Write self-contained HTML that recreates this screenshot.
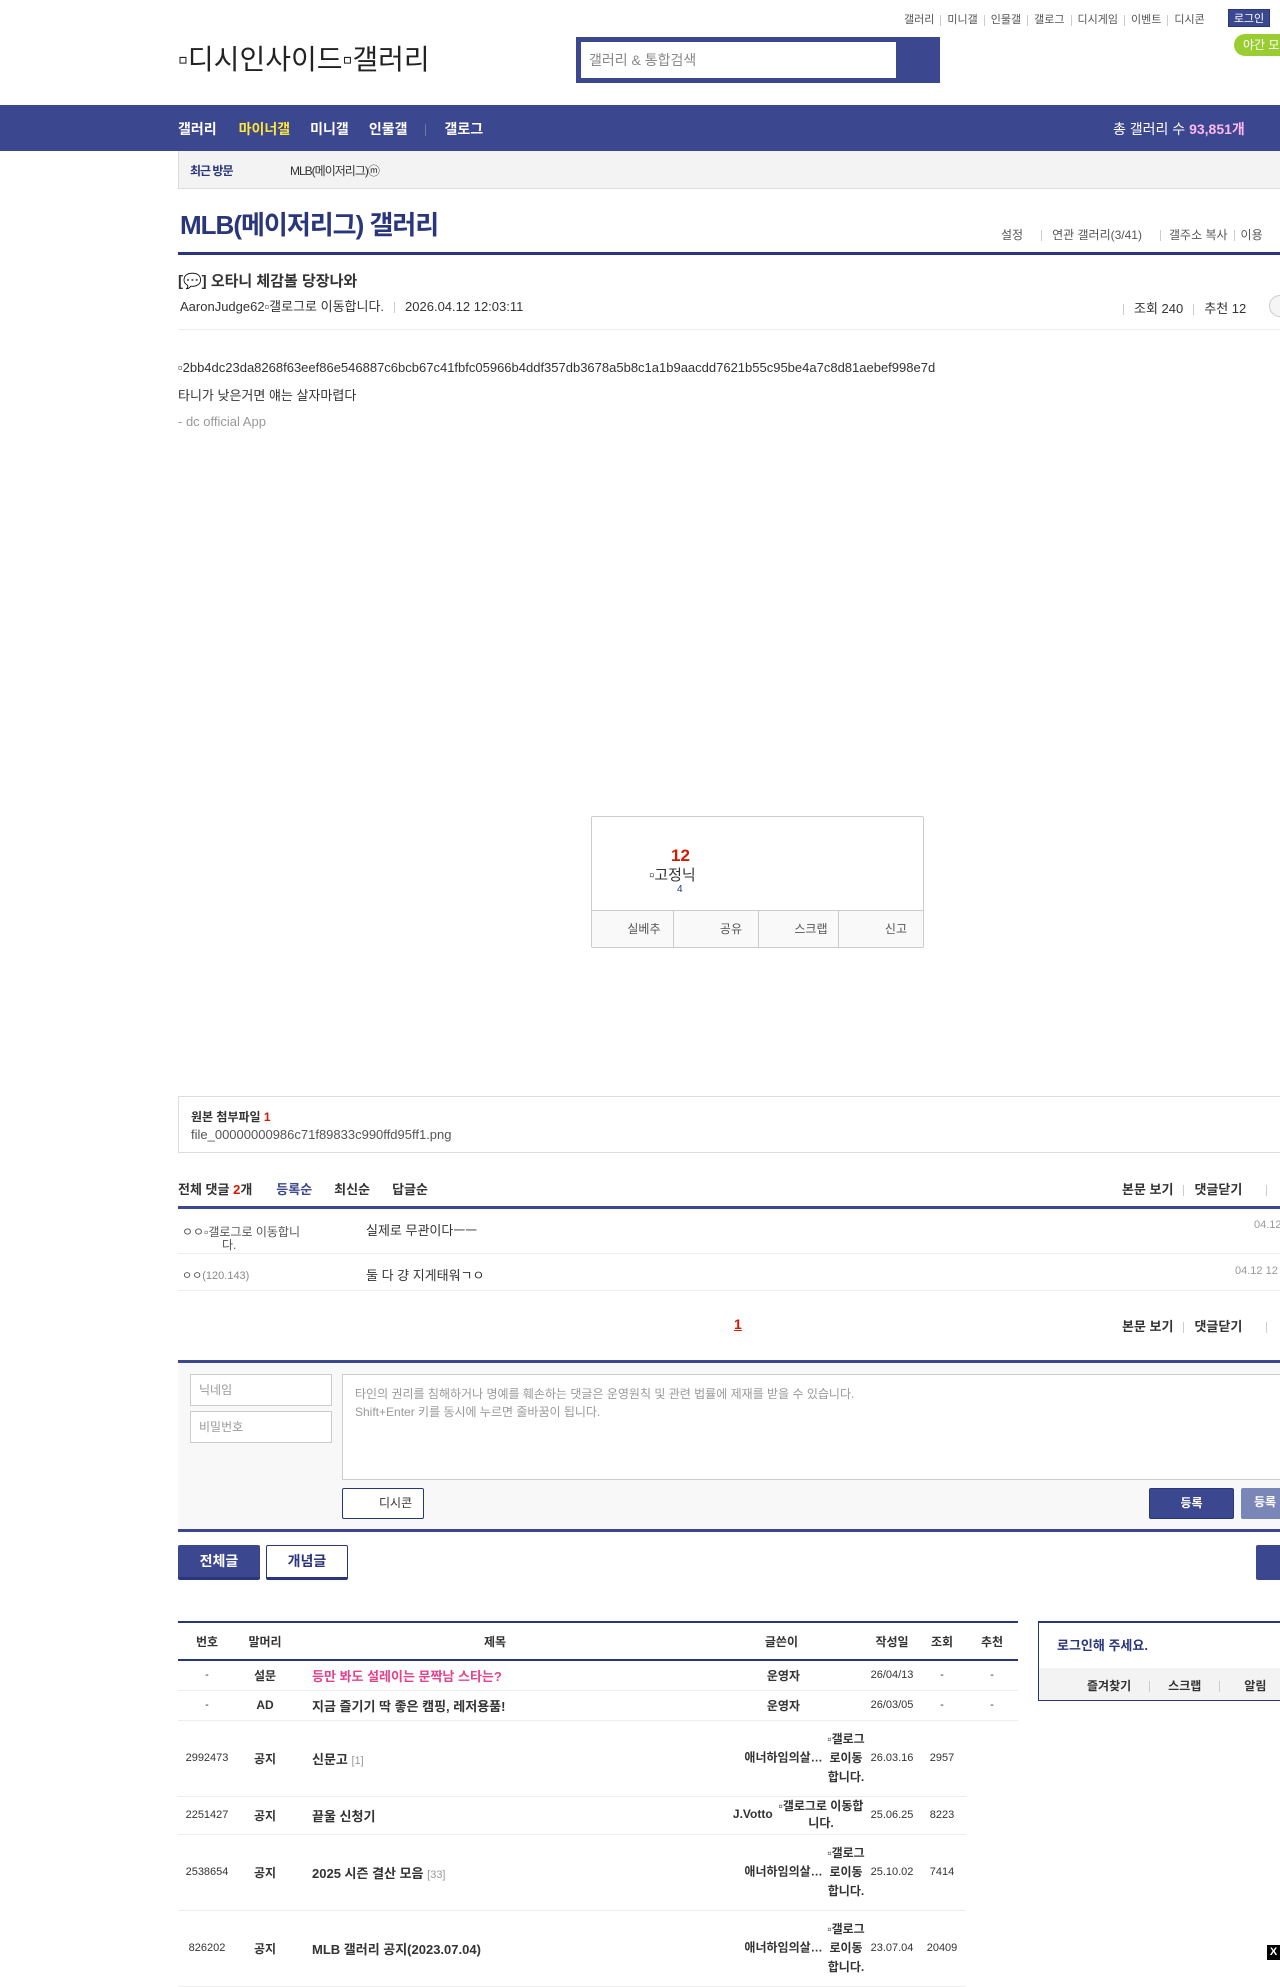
<!DOCTYPE html>
<html><head><meta charset="utf-8"><style>
*{margin:0;padding:0;box-sizing:border-box}
body{width:1280px;height:1960px;overflow:hidden;background:#fff;font-family:"Liberation Sans","Noto Sans CJK KR",sans-serif;color:#333;position:relative;font-size:13px}
.a{position:absolute;white-space:nowrap}
.sep{display:inline-block;width:1px;height:11px;background:#ccc;margin:0 6px;vertical-align:middle}
table{border-collapse:collapse}
.lt td{font-size:11px;text-align:center;border-bottom:1px solid #eee;color:#333}
.lt td.t{text-align:left;font-size:13px;font-weight:bold;padding-left:18px}
.lt td.b{font-weight:bold;font-size:12px}
</style></head><body>
<div class="a" style="left:904px;top:11px;font-size:11px;color:#555">갤러리<span class="sep"></span>미니갤<span class="sep"></span>인물갤<span class="sep"></span>갤로그<span class="sep"></span>디시게임<span class="sep"></span>이벤트<span class="sep"></span>디시콘</div>
<div class="a" style="left:1228px;top:9px;width:42px;height:18px;background:#3b4890;color:#fff;font-size:11px;text-align:center;line-height:18px;border:1px solid #29367c">로그인</div>
<div class="a" style="left:1234px;top:34px;width:60px;height:22px;background:#9acd32;border-radius:11px;color:#fff;font-size:12px;line-height:22px;padding-left:9px">야간 모드</div>
<div class="a" style="left:178px;top:38px;font-size:28px;color:#222">▫디시인사이드▫갤러리</div>
<div class="a" style="left:576px;top:37px;width:364px;height:46px;background:#3b4890"></div>
<div class="a" style="left:581px;top:42px;width:315px;height:36px;background:#fff;font-size:14px;color:#888;line-height:36px;padding-left:8px">갤러리 &amp; 통합검색</div>
<div class="a" style="left:0;top:105px;width:1280px;height:46px;background:#3b4890"></div>
<div class="a" style="left:178px;top:119px;font-size:14px;font-weight:bold;color:#fff">갤러리<span style="color:#ffe63b;margin-left:22px">마이너갤</span><span style="margin-left:20px">미니갤</span><span style="margin-left:20px">인물갤</span><span style="display:inline-block;width:1px;height:12px;background:#6b76b0;margin:0 18px;vertical-align:middle"></span>갤로그</div>
<div class="a" style="left:1113px;top:119px;font-size:14px;color:#fff">총 갤러리 수 <b style="color:#ffb7f0">93,851개</b></div>
<div class="a" style="left:178px;top:151px;width:1110px;height:38px;background:#f3f3f3;border:1px solid #ddd;border-top:none"></div>
<div class="a" style="left:190px;top:162px;font-size:12px;font-weight:bold;color:#29367c;letter-spacing:-1px">최근 방문</div>
<div class="a" style="left:290px;top:162px;font-size:12px;color:#333;letter-spacing:-1px">MLB(메이저리그)ⓜ</div>
<div class="a" style="left:180px;top:205px;font-size:26px;color:#29367c;letter-spacing:-1px;font-weight:bold">MLB(메이저리그) 갤러리</div>
<div class="a" style="left:1001px;top:226px;font-size:12px;color:#555">설정<span class="sep" style="margin:0 10px 0 18px"></span>연관 갤러리(3/41)<span class="sep" style="margin:0 8px 0 18px"></span>갤주소 복사<span class="sep"></span>이용</div>
<div class="a" style="left:178px;top:252px;width:1110px;height:3px;background:#29367c"></div>
<div class="a" style="left:178px;top:270px;font-size:15px;font-weight:bold;color:#333">[💬] 오타니 체감볼 당장나와</div>
<div class="a" style="left:180px;top:296px;font-size:13px;color:#333">AaronJudge62▫갤로그로 이동합니다.<span class="sep" style="margin:0 10px"></span>2026.04.12 12:03:11</div>
<div class="a" style="left:1123px;top:298px;font-size:13px;color:#333"><span class="sep" style="margin:0 10px 0 0"></span>조회 240<span class="sep" style="margin:0 10px"></span>추천 12</div>
<div class="a" style="left:1269px;top:295px;width:22px;height:22px;border-radius:11px;border:1px solid #ccc;background:#f5f5f5"></div>
<div class="a" style="left:178px;top:329px;width:1110px;height:1px;background:#eee"></div>
<div class="a" style="left:178px;top:360px;font-size:13px;color:#333">▫2bb4dc23da8268f63eef86e546887c6bcb67c41fbfc05966b4ddf357db3678a5b8c1a1b9aacdd7621b55c95be4a7c8d81aebef998e7d</div>
<div class="a" style="left:178px;top:385px;font-size:13px">타니가 낮은거면 얘는 살자마렵다</div>
<div class="a" style="left:178px;top:414px;font-size:13px;color:#999">- dc official App</div>
<div class="a" style="left:591px;top:816px;width:333px;height:132px;border:1px solid #ccc;border-radius:2px"></div>
<div class="a" style="left:671px;top:846px;font-size:17px;font-weight:bold;color:#d31900">12</div>
<div class="a" style="left:649px;top:864px;font-size:15px;color:#333">▫고정닉</div>
<div class="a" style="left:677px;top:884px;font-size:10px;color:#29367c">4</div>
<div class="a" style="left:592px;top:910px;width:331px;height:37px;background:#f9f9f9;border-top:1px solid #ccc;display:flex;font-size:12px;color:#555">
<div style="flex:1;border-right:1px solid #ccc;text-align:right;padding-right:12px;line-height:36px">실베추</div>
<div style="flex:1;border-right:1px solid #ccc;text-align:right;padding-right:16px;line-height:36px">공유</div>
<div style="flex:1;border-right:1px solid #ccc;text-align:right;padding-right:10px;line-height:36px">스크랩</div>
<div style="flex:1;text-align:right;padding-right:16px;line-height:36px">신고</div></div>
<div class="a" style="left:178px;top:1096px;width:1110px;height:57px;border:1px solid #ddd"></div>
<div class="a" style="left:191px;top:1108px;font-size:12px;font-weight:bold">원본 첨부파일 <span style="color:#d31900">1</span></div>
<div class="a" style="left:191px;top:1127px;font-size:13px;color:#555">file_00000000986c71f89833c990ffd95ff1.png</div>
<div class="a" style="left:178px;top:1179px;font-size:13px;font-weight:bold">전체 댓글 <span style="color:#d31900">2</span>개<span style="color:#3b4890;margin-left:24px">등록순</span><span style="margin-left:22px">최신순</span><span style="margin-left:22px">답글순</span></div>
<div class="a" style="left:1122px;top:1179px;font-size:13px;font-weight:bold">본문 보기<span class="sep" style="margin:0 10px"></span>댓글닫기<span class="sep" style="margin:0 0 0 24px"></span></div>
<div class="a" style="left:178px;top:1206px;width:1110px;height:3px;background:#3b4890"></div>
<div class="a" style="left:182px;top:1223px;font-size:12px;color:#555">ㅇㅇ▫갤로그로 이동합니</div>
<div class="a" style="left:222px;top:1236px;font-size:12px;color:#555">다.</div>
<div class="a" style="left:366px;top:1220px;font-size:13px">실제로 무관이다ㅡㅡ</div>
<div class="a" style="left:1254px;top:1219px;font-size:11px;color:#999">04.12</div>
<div class="a" style="left:178px;top:1253px;width:1110px;height:1px;background:#eee"></div>
<div class="a" style="left:182px;top:1267px;font-size:11px;color:#555">ㅇㅇ<span style="color:#888">(120.143)</span></div>
<div class="a" style="left:366px;top:1265px;font-size:13px">둘 다 걍 지게태워ㄱㅇ</div>
<div class="a" style="left:1235px;top:1265px;font-size:11px;color:#999">04.12 12</div>
<div class="a" style="left:178px;top:1290px;width:1110px;height:1px;background:#eee"></div>
<div class="a" style="left:734px;top:1316px;font-size:14px;font-weight:bold;color:#d31900;text-decoration:underline">1</div>
<div class="a" style="left:1122px;top:1316px;font-size:13px;font-weight:bold">본문 보기<span class="sep" style="margin:0 10px"></span>댓글닫기<span class="sep" style="margin:0 0 0 24px"></span></div>
<div class="a" style="left:178px;top:1360px;width:1110px;height:172px;background:#f8f8f8;border-top:3px solid #3b4890;border-bottom:3px solid #3b4890"></div>
<div class="a" style="left:190px;top:1374px;width:142px;height:32px;border:1px solid #ccc;background:#fff;font-size:12px;color:#999;line-height:30px;padding-left:8px">닉네임</div>
<div class="a" style="left:190px;top:1411px;width:142px;height:32px;border:1px solid #ccc;background:#fff;font-size:12px;color:#999;line-height:30px;padding-left:8px">비밀번호</div>
<div class="a" style="left:342px;top:1374px;width:950px;height:106px;border:1px solid #ccc;background:#fff;font-size:12px;color:#999;padding:10px 12px;line-height:18px;white-space:normal">타인의 권리를 침해하거나 명예를 훼손하는 댓글은 운영원칙 및 관련 법률에 제재를 받을 수 있습니다.<br>Shift+Enter 키를 동시에 누르면 줄바꿈이 됩니다.</div>
<div class="a" style="left:342px;top:1488px;width:82px;height:31px;border:1px solid #29367c;border-radius:2px;background:#fff;font-size:12px;color:#333;line-height:29px;padding-left:36px">디시콘</div>
<div class="a" style="left:1149px;top:1488px;width:85px;height:31px;background:#3b4890;border:1px solid #29367c;border-radius:2px;color:#fff;font-size:12px;font-weight:bold;text-align:center;line-height:29px">등록</div>
<div class="a" style="left:1241px;top:1488px;width:60px;height:31px;background:#7b86b8;border-radius:2px;color:#fff;font-size:12px;font-weight:bold;line-height:29px;padding-left:13px">등록</div>
<div class="a" style="left:178px;top:1545px;width:82px;height:35px;background:#3b4890;border-bottom:3px solid #29367c;border-radius:2px;color:#fff;font-size:14px;font-weight:bold;text-align:center;line-height:33px">전체글</div>
<div class="a" style="left:266px;top:1545px;width:82px;height:35px;background:#fff;border:1px solid #29367c;border-bottom:3px solid #29367c;border-radius:2px;color:#29367c;font-size:14px;font-weight:bold;text-align:center;line-height:31px">개념글</div>
<div class="a" style="left:1256px;top:1545px;width:40px;height:35px;background:#3b4890;border-radius:2px"></div>
<div class="a" style="left:178px;top:1621px;width:840px;height:2px;background:#29367c"></div>
<table class="a lt" style="left:178px;top:1623px;width:840px">
<tr style="height:37px"><td style="width:58px;font-size:12px;font-weight:bold;border-bottom:2px solid #29367c">번호</td><td style="width:58px;font-size:12px;font-weight:bold;border-bottom:2px solid #29367c">말머리</td><td style="font-size:12px;font-weight:bold;border-bottom:2px solid #29367c">제목</td><td style="width:170px;font-size:12px;font-weight:bold;border-bottom:2px solid #29367c;text-align:right;padding-right:68px">글쓴이</td><td style="width:52px;font-size:12px;font-weight:bold;border-bottom:2px solid #29367c">작성일</td><td style="width:48px;font-size:12px;font-weight:bold;border-bottom:2px solid #29367c">조회</td><td style="width:52px;font-size:12px;font-weight:bold;border-bottom:2px solid #29367c">추천</td></tr>
<tr style="height:30px"><td>-</td><td class="b">설문</td><td class="t" style="color:#e5418c">등만 봐도 설레이는 문짝남 스타는?</td><td class="b" style="text-align:right;padding-right:66px">운영자</td><td>26/04/13</td><td>-</td><td>-</td></tr>
<tr style="height:30px"><td>-</td><td class="b">AD</td><td class="t">지금 즐기기 딱 좋은 캠핑, 레저용품!</td><td class="b" style="text-align:right;padding-right:66px">운영자</td><td>26/03/05</td><td>-</td><td>-</td></tr>
<tr style="height:76px"><td>2992473</td><td class="b">공지</td><td class="t">신문고 <span style="color:#999;font-weight:normal;font-size:11px">[1]</span></td><td class="b" style="text-align:right;white-space:nowrap">애너하임의살… <span style="display:inline-block;width:40px;white-space:normal;vertical-align:middle;text-align:center;line-height:19px">▫갤로그로이동합니다.</span></td><td>26.03.16</td><td>2957</td><td style="border:none"></td></tr>
<tr style="height:38px"><td>2251427</td><td class="b">공지</td><td class="t">끝울 신청기</td><td class="b" style="text-align:right;white-space:nowrap">J.Votto <span style="display:inline-block;width:90px;white-space:normal;vertical-align:middle;text-align:center;line-height:17px">▫갤로그로 이동합니다.</span></td><td>25.06.25</td><td>8223</td><td style="border:none"></td></tr>
<tr style="height:76px"><td>2538654</td><td class="b">공지</td><td class="t">2025 시즌 결산 모음 <span style="color:#999;font-weight:normal;font-size:11px">[33]</span></td><td class="b" style="text-align:right;white-space:nowrap">애너하임의살… <span style="display:inline-block;width:40px;white-space:normal;vertical-align:middle;text-align:center;line-height:19px">▫갤로그로이동합니다.</span></td><td>25.10.02</td><td>7414</td><td style="border:none"></td></tr>
<tr style="height:76px"><td>826202</td><td class="b">공지</td><td class="t">MLB 갤러리 공지(2023.07.04)</td><td class="b" style="text-align:right;white-space:nowrap">애너하임의살… <span style="display:inline-block;width:40px;white-space:normal;vertical-align:middle;text-align:center;line-height:19px">▫갤로그로이동합니다.</span></td><td>23.07.04</td><td>20409</td><td style="border:none"></td></tr>
</table>
<div class="a" style="left:1038px;top:1621px;width:260px;height:80px;border:1px solid #29367c;border-top:2px solid #29367c"></div>
<div class="a" style="left:1057px;top:1635px;font-size:13px;font-weight:bold;color:#29367c">로그인해 주세요.</div>
<div class="a" style="left:1039px;top:1668px;width:250px;height:32px;background:#f3f3f3"></div>
<div class="a" style="left:1087px;top:1677px;font-size:12px;font-weight:bold;color:#333">즐겨찾기<span class="sep" style="margin:0 18px"></span>스크랩<span class="sep" style="margin:0 24px 0 18px"></span>알림</div>
<div class="a" style="left:1267px;top:1945px;width:13px;height:15px;background:#000;color:#fff;font-size:11px;font-weight:bold;text-align:center;line-height:15px">X</div>
</body></html>
